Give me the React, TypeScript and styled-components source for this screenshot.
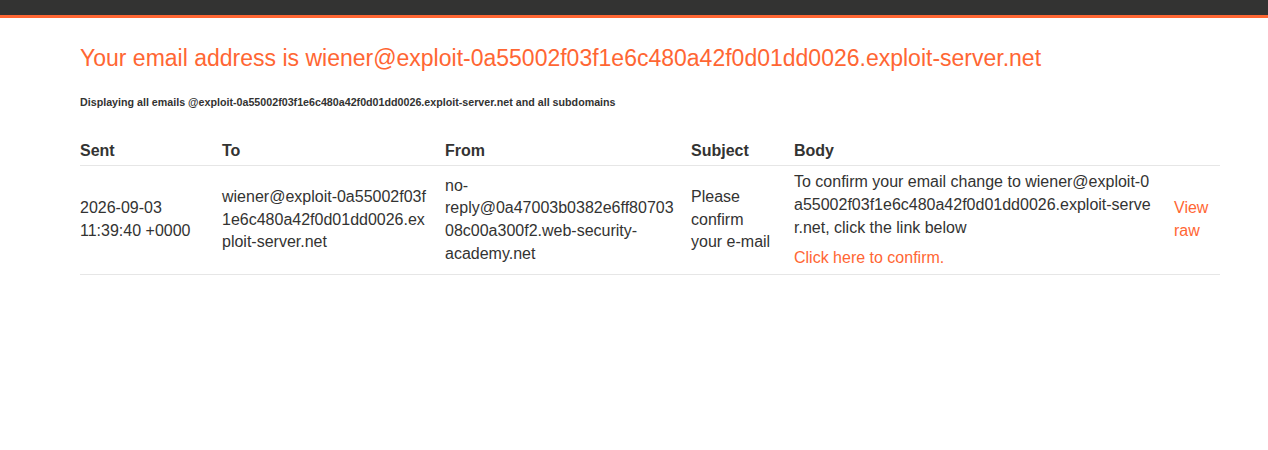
import React from "react";
import styled, { createGlobalStyle } from "styled-components";

const Global = createGlobalStyle`
  html, body { margin: 0; padding: 0; background: #fff; }
  body { font-family: "Liberation Sans", Arial, sans-serif; color: #333332; }
`;

const TopBar = styled.div`
  height: 15px;
  background: #333332;
  border-bottom: 3px solid #ff6633;
`;

const Container = styled.main`
  padding: 0 48px 0 80px;
`;

const Title = styled.h1`
  margin: 27px 0 0;
  font-size: 23px;
  font-weight: normal;
  color: #ff6633;
  line-height: 1.2;
`;

const Note = styled.h4`
  margin: 23px 0 0;
  font-size: 10.7px;
  font-weight: bold;
  line-height: 1.2;
`;

const Table = styled.table`
  margin-top: 32px;
  width: 1140px;
  border-collapse: collapse;
  table-layout: fixed;
  font-size: 16px;
  line-height: 22.7px;
`;

const Th = styled.th<{ $w: number }>`
  width: ${(p) => p.$w}px;
  text-align: left;
  font-weight: bold;
  padding: 0 0 2px;
  border-bottom: 1px solid #e6e6e6;
  vertical-align: bottom;
`;

const Td = styled.td<{ $pad?: number }>`
  padding: 4px ${(p) => p.$pad ?? 16}px 4px 0;
  vertical-align: middle;
  border-bottom: 1px solid #e6e6e6;
  overflow-wrap: anywhere;
`;

const BreakTd = styled(Td)`
  word-break: break-all;
`;

const Link = styled.a`
  color: #ff6633;
  text-decoration: none;
`;

const BodyText = styled.div`
  word-break: break-all;
  padding-top: 1px;
`;

const ConfirmLink = styled(Link)`
  display: block;
  margin-top: 8px;
`;

export default function App() {
  return (
    <>
      <Global />
      <TopBar />
      <Container>
        <Title>
          Your email address is wiener@exploit-0a55002f03f1e6c480a42f0d01dd0026.exploit-server.net
        </Title>
        <Note>
          Displaying all emails @exploit-0a55002f03f1e6c480a42f0d01dd0026.exploit-server.net and all subdomains
        </Note>
        <Table>
          <thead>
            <tr>
              <Th $w={142}>Sent</Th>
              <Th $w={223}>To</Th>
              <Th $w={246}>From</Th>
              <Th $w={103}>Subject</Th>
              <Th $w={380}>Body</Th>
              <Th $w={46}></Th>
            </tr>
          </thead>
          <tbody>
            <tr>
              <Td>2026-09-03 11:39:40 +0000</Td>
              <BreakTd>wiener@exploit-0a55002f03f1e6c480a42f0d01dd0026.exploit-server.net</BreakTd>
              <Td>no-reply@0a47003b0382e6ff8070308c00a300f2.web-security-academy.net</Td>
              <Td>Please confirm your e-mail</Td>
              <Td $pad={20}>
                <BodyText>
                  To confirm your email change to wiener@exploit-0a55002f03f1e6c480a42f0d01dd0026.exploit-server.net, click the link below
                </BodyText>
                <ConfirmLink href="#">Click here to confirm.</ConfirmLink>
              </Td>
              <Td $pad={0}>
                <Link href="#">View raw</Link>
              </Td>
            </tr>
          </tbody>
        </Table>
      </Container>
    </>
  );
}
